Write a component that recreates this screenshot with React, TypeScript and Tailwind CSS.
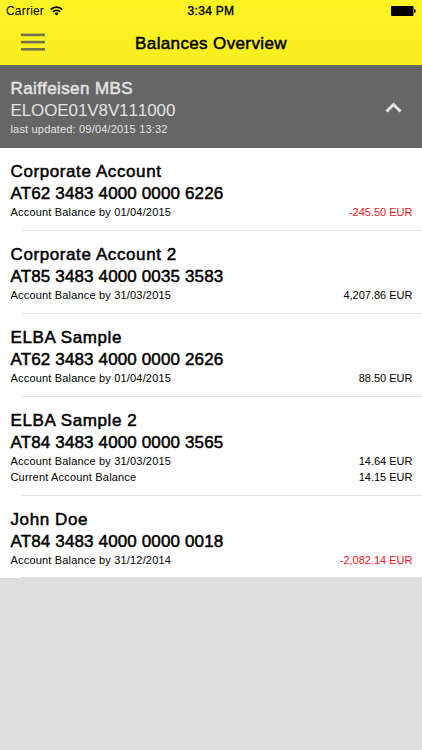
type Balance = { label: string; amount: string };

type Account = { name: string; iban: string; balances: Balance[] };

const accounts: Account[] = [
  {
    name: "Corporate Account",
    iban: "AT62 3483 4000 0000 6226",
    balances: [{ label: "Account Balance by 01/04/2015", amount: "-245.50" }],
  },
  {
    name: "Corporate Account 2",
    iban: "AT85 3483 4000 0035 3583",
    balances: [{ label: "Account Balance by 31/03/2015", amount: "4,207.86" }],
  },
  {
    name: "ELBA Sample",
    iban: "AT62 3483 4000 0000 2626",
    balances: [{ label: "Account Balance by 01/04/2015", amount: "88.50" }],
  },
  {
    name: "ELBA Sample 2",
    iban: "AT84 3483 4000 0000 3565",
    balances: [
      { label: "Account Balance by 31/03/2015", amount: "14.64" },
      { label: "Current Account Balance", amount: "14.15" },
    ],
  },
  {
    name: "John Doe",
    iban: "AT84 3483 4000 0000 0018",
    balances: [{ label: "Account Balance by 31/12/2014", amount: "-2,082.14" }],
  },
];

function StatusBar() {
  return (
    <div className="grid h-[22px] grid-cols-3 items-center pl-[6px] pr-[6px] text-[12px] leading-[22px]">
      <div className="flex items-center gap-[6px]">
        <span className="tracking-[0.2px]">Carrier</span>
        <svg width="13" height="10" viewBox="0 0 13 10" fill="none" stroke="#000" strokeWidth="1.8">
          <path d="M0.7 3.6a8.2 8.2 0 0 1 11.6 0" />
          <path d="M2.8 5.9a5.2 5.2 0 0 1 7.4 0" />
          <path d="M6.5 9.6L4.4 7.5a2.9 2.9 0 0 1 4.2 0z" fill="#000" stroke="none" />
        </svg>
      </div>
      <span className="text-center tracking-[0.3px] [-webkit-text-stroke:0.35px_#000]">3:34 PM</span>
      <svg className="justify-self-end" width="25" height="10" viewBox="0 0 25 10">
        <rect x="0" y="0" width="22.5" height="10" rx="1" fill="#000" />
        <path d="M23 3.3h0.8q1 0 1 1.7t-1 1.7H23z" fill="#000" />
      </svg>
    </div>
  );
}

function NavBar() {
  return (
    <div className="grid h-[43px] grid-cols-[45px_1fr_45px] items-center">
      <button className="ml-[21px] w-6 pb-[3px]" aria-label="Menu">
        <svg className="block" width="24" height="18" viewBox="0 0 24 18" fill="#74724a">
          <rect y="0.6" width="24" height="2.6" />
          <rect y="7.8" width="24" height="2.6" />
          <rect y="15" width="24" height="2.6" />
        </svg>
      </button>
      <h1 className="text-center text-[17px] tracking-[0.37px] [-webkit-text-stroke:0.5px_#000]">
        Balances Overview
      </h1>
    </div>
  );
}

function BankHeader() {
  return (
    <div className="flex h-[83px] items-center justify-between bg-[#666] pl-[10.5px] pr-[20px] text-[#e2e2e2]">
      <div className="pt-[1px]">
        <p className="text-[17px] leading-[22px] tracking-[0.4px] [-webkit-text-stroke:0.5px_#e2e2e2]">
          Raiffeisen MBS
        </p>
        <p className="text-[17px] leading-[22px] tracking-[-0.1px] [font-kerning:none]">ELOOE01V8V111000</p>
        <p className="text-[11px] leading-[15px] tracking-[0.18px]">last updated: 09/04/2015 13:32</p>
      </div>
      <svg className="mt-[2px]" width="17" height="11" viewBox="0 0 17 11" fill="none" stroke="#e2e2e2" strokeWidth="3">
        <path d="M1.5 9.5l7-7 7 7" />
      </svg>
    </div>
  );
}

function AccountRow({ account }: { account: Account }) {
  return (
    <li className="group">
      <div className="pb-[10px] pl-[10.5px] pr-[9.5px] pt-[13px] group-last:pb-[9px]">
        <p className="text-[17px] leading-[22px] tracking-[0.6px] [-webkit-text-stroke:0.5px_#000]">{account.name}</p>
        <p className="text-[17px] leading-[21px] tracking-[0.14px] [-webkit-text-stroke:0.5px_#000]">{account.iban}</p>
        {account.balances.map((balance) => (
          <div key={balance.label} className="flex justify-between text-[11px] leading-[16px]">
            <span className="tracking-[0.18px]">{balance.label}</span>
            <span className={balance.amount.startsWith("-") ? "text-[#f0141a]" : ""}>
              {balance.amount} EUR
            </span>
          </div>
        ))}
      </div>
      <div className="ml-[21px] h-px bg-[#e4e4e4]" />
    </li>
  );
}

export default function App() {
  return (
    <div className="flex h-[750px] w-[422px] flex-col overflow-hidden bg-[#dedede] font-['Liberation_Sans',Arial,sans-serif] text-black">
      <header className="bg-linear-to-b from-[#fff525] to-[#f8ee20]">
        <StatusBar />
        <NavBar />
      </header>
      <BankHeader />
      <ul className="bg-white">
        {accounts.map((account) => (
          <AccountRow key={account.name} account={account} />
        ))}
      </ul>
    </div>
  );
}
